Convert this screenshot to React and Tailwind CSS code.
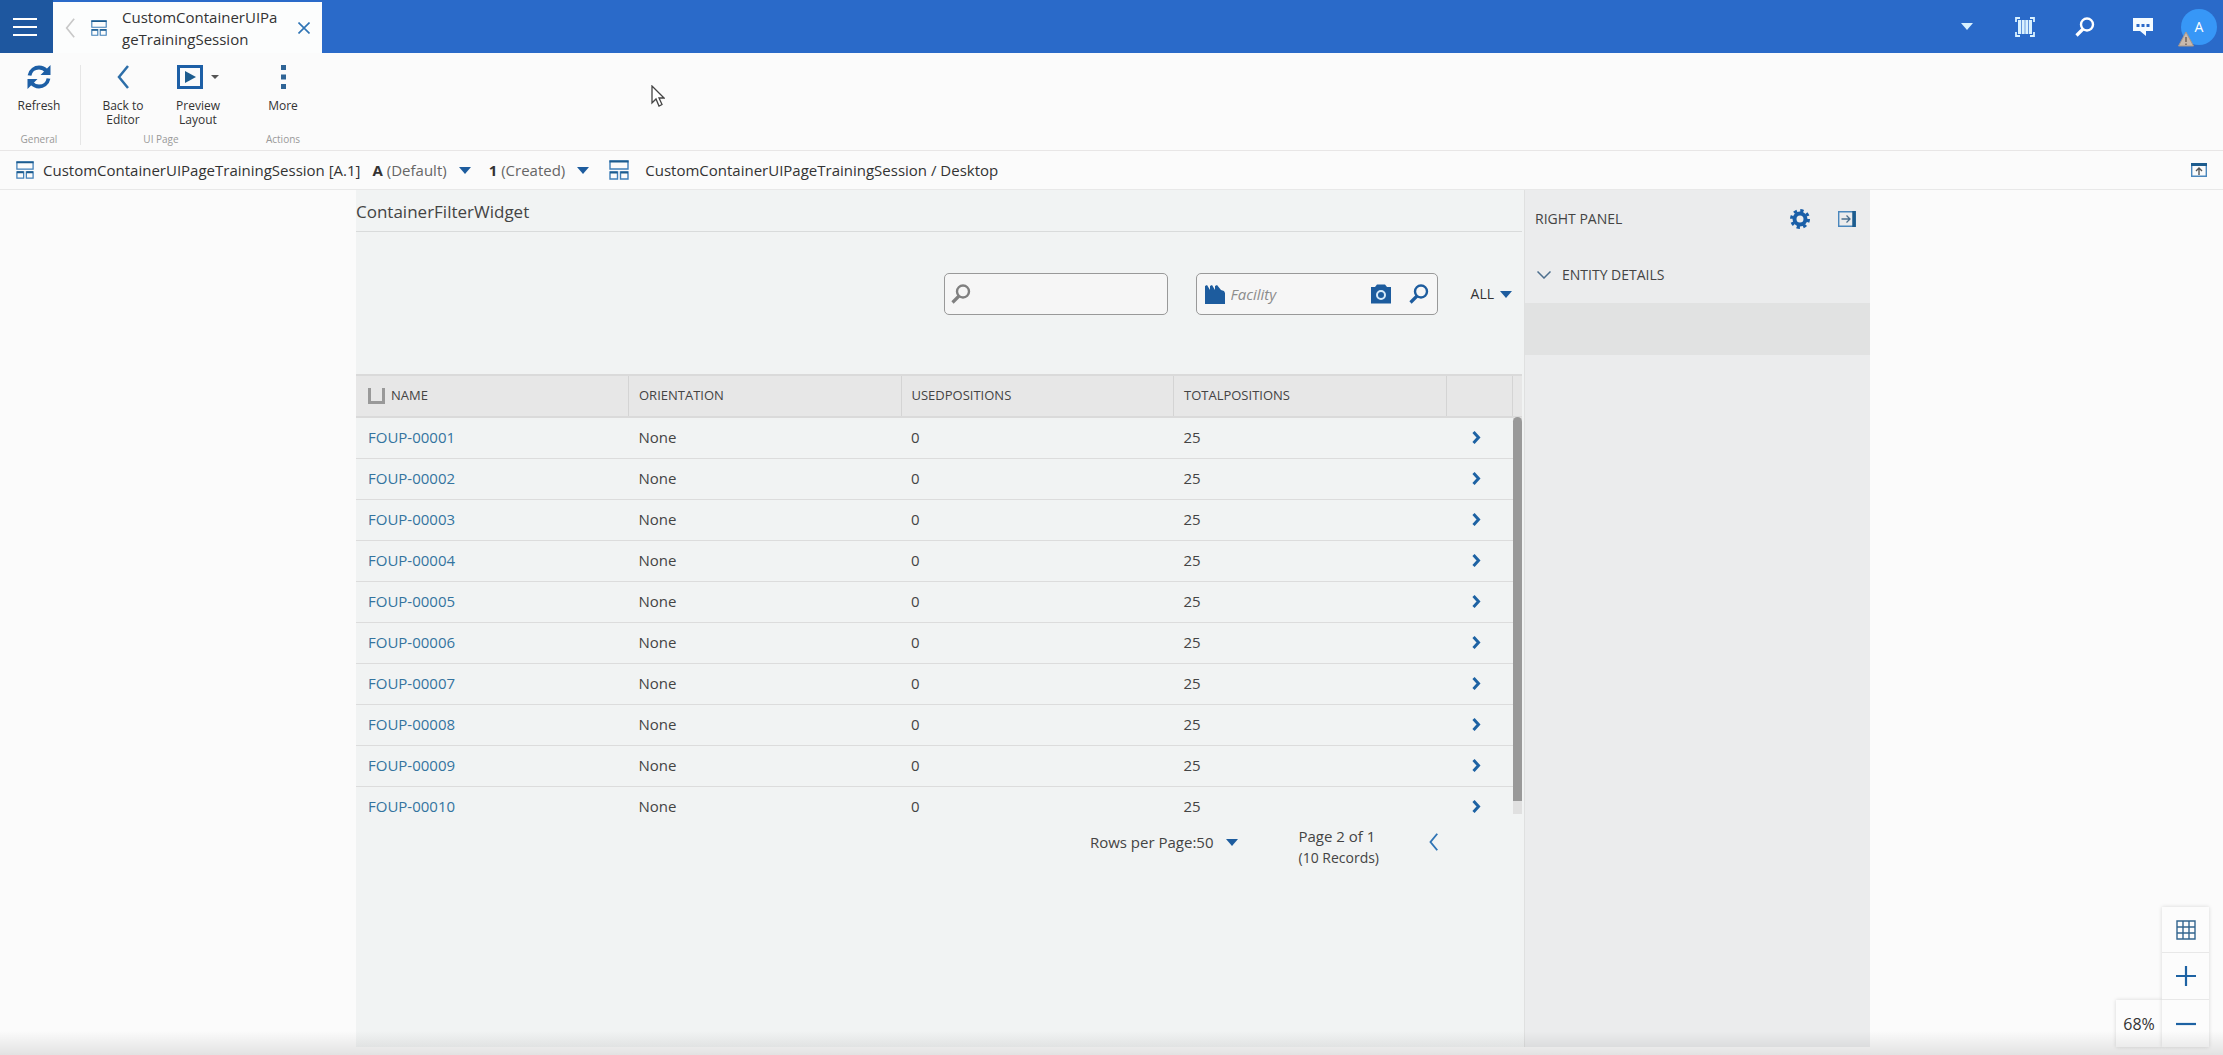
import React, { useState } from 'react';

const containers = Array.from({ length: 10 }, (_, i) => ({
    name: `FOUP-${String(i + 1).padStart(5, '0')}`,
    orientation: 'None',
    used: 0,
    total: 25,
}));

const Caret = ({ className = 'text-[#1d5c9e]' }) => (
    <svg viewBox="0 0 12 7" className={`h-[7px] w-3 shrink-0 ${className}`} fill="currentColor">
        <path d="M0 0h12L6 7z" />
    </svg>
);

const PageIcon = ({ className }) => (
    <svg viewBox="0 0 20 20" className={`shrink-0 ${className}`} fill="none" stroke="#3f7fb8" strokeWidth="1.4">
        <path d="M1 1h18v8H1zM1 12h7.5v7H1zM11.5 12H19v7h-7.5z" />
        <path d="M0.5 1.5h19M1 12.5h7.5M11.5 12.5H19" stroke="#1d5c8e" strokeWidth="2" />
    </svg>
);

const SearchIcon = ({ className }) => (
    <svg viewBox="0 0 20 20" className={`h-5 w-5 shrink-0 ${className}`} fill="none" stroke="currentColor">
        <circle cx="12" cy="7.5" r="6" strokeWidth="2.4" />
        <path d="M8 12l-6.5 6.5" strokeWidth="3.2" />
    </svg>
);

const Chevron = ({ className, strokeWidth = 2 }) => (
    <svg viewBox="0 0 12 24" className={`shrink-0 ${className}`} fill="none" stroke="currentColor" strokeWidth={strokeWidth}>
        <path d="M11 1L2 12l9 11" />
    </svg>
);

const RefreshIcon = () => (
    <svg viewBox="0 0 24 24" className="h-6 w-6" fill="none" stroke="#1d5fa6" strokeWidth="3.8">
        <path d="M2.5 10.5C3.5 5 8 2.5 12 2.5c3 0 5.5 1.2 7.5 3.5" />
        <path d="M21.5 13.5C20.5 19 16 21.5 12 21.5c-3 0-5.5-1.2-7.5-3.5" />
        <path d="M23.5 0v10h-10zM0.5 24V14h10z" fill="#1d5fa6" stroke="none" />
    </svg>
);

const PreviewIcon = () => (
    <svg viewBox="0 0 26 24" className="h-6 w-[26px]">
        <path d="M1.5 1.5h23v21h-23z" fill="none" stroke="#1d5fa6" strokeWidth="3" />
        <path d="M8 6l11 6-11 6z" fill="#1d5c8e" />
    </svg>
);

const ToolButton = ({ icon, label, className = '' }) => (
    <button className={`flex flex-col items-center ${className}`}>
        <span className="flex h-6 items-center">{icon}</span>
        <span className="mt-[10px] text-xs leading-[14px] text-[#333]">{label}</span>
    </button>
);

const ToolGroup = ({ title, className, children }) => (
    <div className={`flex flex-col justify-between ${className}`}>
        <div className="flex justify-center">{children}</div>
        <div className="text-center text-[10px] leading-3 text-[#999]">{title}</div>
    </div>
);

const TopBar = () => (
    <header className="flex h-[53px] bg-[#2a6ac9]">
        <button aria-label="Menu" className="flex w-[53px] flex-col items-center justify-center gap-[6px] bg-[#1e579f] pr-1">
            <span className="h-[2px] w-6 bg-white" />
            <span className="h-[2px] w-6 bg-white" />
            <span className="h-[2px] w-6 bg-white" />
        </button>
        <div className="mt-[2px] flex w-[269px] items-center bg-[#fcfdfd] px-3">
            <button aria-label="Back">
                <Chevron className="h-5 w-[10px] text-[#c8c8c8]" />
            </button>
            <PageIcon className="ml-4 h-4 w-4" />
            <div className="ml-[15px] w-[160px] text-[15px] leading-[22px] break-all text-[#333]">
                CustomContainerUIPageTrainingSession
            </div>
            <button aria-label="Close tab" className="ml-auto">
                <svg viewBox="0 0 12 12" className="h-3 w-3" stroke="#2f74b5" strokeWidth="1.6">
                    <path d="M0.5 0.5l11 11M11.5 0.5l-11 11" />
                </svg>
            </button>
        </div>
        <div className="ml-auto flex items-center pr-[6px] text-[#d9f1ff]">
            <button aria-label="Expand">
                <Caret className="text-[#d9f1ff]" />
            </button>
            <button aria-label="Scan" className="ml-[42px]">
                <svg viewBox="0 0 20 20" className="h-5 w-5" fill="none" stroke="currentColor">
                    <path d="M1 5V1h4M15 1h4v4M19 15v4h-4M5 19H1v-4" strokeWidth="1.8" />
                    <path d="M4.5 3v14M8.2 3v14M11.8 3v14M15.5 3v14" strokeWidth="3" />
                </svg>
            </button>
            <button aria-label="Search" className="ml-10">
                <SearchIcon className="text-white" />
            </button>
            <button aria-label="Messages" className="ml-[38px]">
                <svg viewBox="0 0 20 20" className="h-5 w-5">
                    <path d="M0 1h20v13h-7v5l-6-5H0z" fill="#f4fbff" />
                    <path d="M3.5 7h3v3h-3zM8.5 7h3v3h-3zM13.5 7h3v3h-3z" fill="#2a6ac9" />
                </svg>
            </button>
            <button aria-label="Account" className="relative ml-7 h-9 w-9 rounded-full bg-[#3797f7] text-sm text-white">
                A
                <svg viewBox="0 0 16 16" className="absolute -bottom-[2px] -left-[3px] h-4 w-4">
                    <path d="M8 1l7.5 14H0.5z" fill="#c9b9ac" stroke="#a8968a" />
                    <path d="M8 6v5M8 12.5v1.5" stroke="#6b5d55" strokeWidth="1.4" />
                </svg>
            </button>
        </div>
    </header>
);

const Toolbar = () => (
    <div className="flex h-[98px] border-b border-[#e8e6e6] pt-3 pb-[5px]">
        <ToolGroup title="General" className="w-[81px] border-r border-[#e6e6e6] pr-[2px]">
            <ToolButton icon={<RefreshIcon />} label="Refresh" />
        </ToolGroup>
        <ToolGroup title="UI Page" className="w-[160px]">
            <ToolButton
                icon={<Chevron className="h-6 w-3 text-[#2d6ea8]" strokeWidth={2.5} />}
                label={<>Back to<br />Editor</>}
                className="w-[74px]"
            />
            <ToolButton
                icon={
                    <span className="flex items-center gap-2">
                        <PreviewIcon />
                        <svg viewBox="0 0 8 4" className="h-1 w-2" fill="#555">
                            <path d="M0 0h8L4 4z" />
                        </svg>
                    </span>
                }
                label={<>Preview<br />Layout</>}
                className="w-[76px]"
            />
        </ToolGroup>
        <ToolGroup title="Actions" className="w-[84px]">
            <ToolButton
                icon={
                    <svg viewBox="0 0 5 24" className="h-6 w-[5px]" fill="#2f6496">
                        <path d="M0 0h5v5H0zM0 9.5h5v5H0zM0 19h5v5H0z" />
                    </svg>
                }
                label="More"
            />
        </ToolGroup>
    </div>
);

const Breadcrumb = () => (
    <nav className="flex h-[39px] items-center border-b border-[#e8e8e8] px-4 text-[15px] text-[#333]">
        <PageIcon className="h-[18px] w-[18px]" />
        <span className="ml-[9px]">CustomContainerUIPageTrainingSession [A.1]</span>
        <button className="ml-3 flex items-center gap-3">
            <span><b>A</b> <span className="text-[#666]">(Default)</span></span>
            <Caret />
        </button>
        <button className="ml-[18px] flex items-center gap-3">
            <span><b>1</b> <span className="text-[#666]">(Created)</span></span>
            <Caret />
        </button>
        <PageIcon className="ml-5 h-5 w-5" />
        <span className="ml-4">CustomContainerUIPageTrainingSession / Desktop</span>
        <button aria-label="Collapse header" className="ml-auto">
            <svg viewBox="0 0 16 14" className="h-[14px] w-4" fill="none">
                <path d="M0.7 0.7h14.6v12.6H0.7z" stroke="#4a87bd" strokeWidth="1.4" />
                <path d="M0 1.5h16" stroke="#1d5c8e" strokeWidth="3" />
                <path d="M8 12V5.5M5 8l3-3 3 3" stroke="#555" strokeWidth="1.4" />
            </svg>
        </button>
    </nav>
);

const ContainerTable = () => (
    <div className="relative mr-[2px] h-[442px] overflow-hidden">
        <table className="w-full table-fixed border-collapse text-left text-[#444]">
            <colgroup>
                <col />
                <col />
                <col />
                <col />
                <col className="w-[66px]" />
                <col className="w-[10px]" />
            </colgroup>
            <thead className="border-y-2 border-[#dadada] bg-[#e7e7e7] text-[13px] text-[#444]">
                <tr className="h-[42px]">
                    <th className="border-r border-[#d4d4d4] pl-3 font-normal">
                        <span className="flex items-center gap-[6px]">
                            <input
                                type="checkbox"
                                aria-label="Select all"
                                className="h-4 w-[17px] appearance-none border-3 border-t-0 border-[#999]"
                            />
                            NAME
                        </span>
                    </th>
                    <th className="border-r border-[#d4d4d4] pl-[10px] font-normal">ORIENTATION</th>
                    <th className="border-r border-[#d4d4d4] pl-[10px] font-normal">USEDPOSITIONS</th>
                    <th className="border-r border-[#d4d4d4] pl-[10px] font-normal">TOTALPOSITIONS</th>
                    <th className="border-r border-[#d4d4d4]" />
                    <th />
                </tr>
            </thead>
            <tbody className="text-[15px] leading-5">
                {containers.map((row) => (
                    <tr key={row.name} className="h-[41px] border-b border-[#dcdcdc]">
                        <td className="pb-[2px] pl-3">
                            <a href="#" className="text-[#34749f]">{row.name}</a>
                        </td>
                        <td className="pb-[2px] pl-[10px]">{row.orientation}</td>
                        <td className="pb-[2px] pl-[10px]">{row.used}</td>
                        <td className="pb-[2px] pl-[10px]">{row.total}</td>
                        <td className="pl-[26px]">
                            <button aria-label={`Open ${row.name}`} className="block">
                                <svg viewBox="0 0 9 13" className="h-[13px] w-[9px]" fill="none" stroke="#1d62a3" strokeWidth="3">
                                    <path d="M1.5 1l5 5.5-5 5.5" />
                                </svg>
                            </button>
                        </td>
                        <td />
                    </tr>
                ))}
            </tbody>
        </table>
        <div className="absolute top-[43px] right-0 bottom-[2px] w-[9px] bg-[#e0e0e0]">
            <div className="h-[384px] rounded-t-full bg-[#999]" />
        </div>
    </div>
);

const Widget = () => {
    const [search, setSearch] = useState('');
    const [facility, setFacility] = useState('');

    return (
        <section className="flex-1 bg-[#f1f3f3]">
            <h1 className="mr-[2px] h-[42px] border-b border-[#d9dbdb] pt-[11px] text-[17px] leading-[22px] text-[#444]">
                ContainerFilterWidget
            </h1>
            <div className="mt-[41px] flex items-center justify-end pr-3">
                <label className="flex h-[42px] w-[224px] items-center rounded-[5px] border border-[#999] bg-[#f6f6f6] px-[6px]">
                    <SearchIcon className="text-[#808080]" />
                    <input
                        aria-label="Search"
                        value={search}
                        onChange={(e) => setSearch(e.target.value)}
                        className="ml-2 w-full min-w-0 outline-none"
                    />
                </label>
                <label className="ml-7 flex h-[42px] w-[242px] items-center rounded-[5px] border border-[#999] bg-[#f6f6f6] px-2 text-[#1d5c9e]">
                    <svg viewBox="0 0 20 20" className="h-5 w-5 shrink-0" fill="currentColor">
                        <path d="M0 20V2l2-1 3 5V2l2-1 3 5V2l2-1 4 5 3 1 1 2v11z" />
                    </svg>
                    <input
                        aria-label="Facility"
                        placeholder="Facility"
                        value={facility}
                        onChange={(e) => setFacility(e.target.value)}
                        className="ml-[6px] w-full min-w-0 text-[15px] text-[#444] italic outline-none placeholder:text-[#8c8c8c]"
                    />
                    <button aria-label="Scan facility">
                        <svg viewBox="0 0 20 20" className="h-5 w-5">
                            <path d="M0 3h4l2-2.5h8L16 3h4v16.5H0z" fill="currentColor" />
                            <circle cx="10" cy="11" r="4" fill="none" stroke="#d7ebfa" strokeWidth="2" />
                        </svg>
                    </button>
                    <button aria-label="Find facility" className="ml-[18px]">
                        <SearchIcon />
                    </button>
                </label>
                <button className="ml-[33px] flex items-center gap-[6px] text-sm text-[#333]">
                    ALL <Caret />
                </button>
            </div>
            <div className="mt-[59px]">
                <ContainerTable />
            </div>
            <div className="flex items-center justify-end pr-[86px] text-[15px] text-[#444]">
                <button className="flex items-center gap-3">
                    Rows per Page:50 <Caret />
                </button>
                <div className="ml-[61px] pt-[10px] leading-[21px]">
                    <div>Page 2 of 1</div>
                    <div className="text-sm leading-[21px]">(10 Records)</div>
                </div>
                <button aria-label="Previous page" className="ml-[50px]">
                    <Chevron className="h-[18px] w-[9px] text-[#2f74b5]" strokeWidth={2.5} />
                </button>
            </div>
        </section>
    );
};

const RightPanel = () => (
    <aside className="w-[346px] border-l border-[#dfe0e0] bg-[#ebeced] text-sm text-[#444]">
        <div className="flex h-[57px] items-center pr-[14px] pl-[10px]">
            RIGHT PANEL
            <button aria-label="Settings" className="ml-auto">
                <svg viewBox="0 0 20 20" className="h-5 w-5" fill="none" stroke="#1a5fa8">
                    <circle cx="10" cy="10" r="5.5" strokeWidth="4" />
                    <circle cx="10" cy="10" r="8.5" strokeWidth="3" strokeDasharray="3.338 3.338" />
                </svg>
            </button>
            <button aria-label="Hide panel" className="ml-7">
                <svg viewBox="0 0 18 16" className="h-4 w-[18px]" fill="none">
                    <path d="M0.7 0.7h16.6v14.6H0.7z" stroke="#4a87bd" strokeWidth="1.4" />
                    <path d="M16 0v16" stroke="#1d5c8e" strokeWidth="3.5" />
                    <path d="M3.5 8h8M8.5 4.5L12 8l-3.5 3.5" stroke="#4a6f8e" strokeWidth="1.3" />
                </svg>
            </button>
        </div>
        <button className="flex h-14 w-full items-center gap-[11px] pl-3">
            <svg viewBox="0 0 14 8" className="h-2 w-[14px]" fill="none" stroke="#4d6f8e" strokeWidth="1.5">
                <path d="M0.5 0.5L7 7l6.5-6.5" />
            </svg>
            ENTITY DETAILS
        </button>
        <div className="h-[52px] bg-[#e1e2e2]" />
    </aside>
);

const ZoomControls = () => (
    <div className="absolute right-[14px] bottom-0 flex items-end text-base text-[#333]">
        <div className="flex h-[47px] w-[46px] items-center justify-center bg-[#fcfcfc] shadow-[0_0_4px_rgba(0,0,0,0.15)]">68%</div>
        <div className="flex w-[47px] flex-col divide-y divide-[#e8e8e8] bg-[#fcfcfc] shadow-[0_0_4px_rgba(0,0,0,0.15)]">
            <button aria-label="Toggle grid" className="flex h-[46px] items-center justify-center">
                <svg viewBox="0 0 20 20" className="h-5 w-5" fill="none" stroke="#33658f" strokeWidth="1.4">
                    <path d="M1 1h18v18H1zM7 1v18M13 1v18M1 7h18M1 13h18" />
                </svg>
            </button>
            <button aria-label="Zoom in" className="flex h-[47px] items-center justify-center">
                <svg viewBox="0 0 20 20" className="h-5 w-5" stroke="#1d62a3" strokeWidth="2.2">
                    <path d="M10 0v20M0 10h20" />
                </svg>
            </button>
            <button aria-label="Zoom out" className="flex h-[47px] items-center justify-center">
                <svg viewBox="0 0 20 20" className="h-5 w-5" stroke="#1d62a3" strokeWidth="2.2">
                    <path d="M0 10h20" />
                </svg>
            </button>
        </div>
    </div>
);

const App = () => (
    <div className="relative flex min-h-screen flex-col bg-[#fbfbfb] font-['Open_Sans',sans-serif]">
        <TopBar />
        <Toolbar />
        <Breadcrumb />
        <main className="relative mb-2 flex flex-1 pr-[353px] pl-[356px]">
            <Widget />
            <RightPanel />
            <ZoomControls />
        </main>
        <div className="pointer-events-none absolute inset-x-0 bottom-0 h-6 bg-linear-to-b from-transparent to-black/10" />
        <svg viewBox="0 0 14 22" className="pointer-events-none absolute top-[85px] left-[651px] h-[22px] w-[14px]">
            <path d="M1 1v17l4-4 3 7 3-1.5-3-6.5h5z" fill="#fff" stroke="#444" strokeWidth="1.3" />
        </svg>
    </div>
);

export default App;
